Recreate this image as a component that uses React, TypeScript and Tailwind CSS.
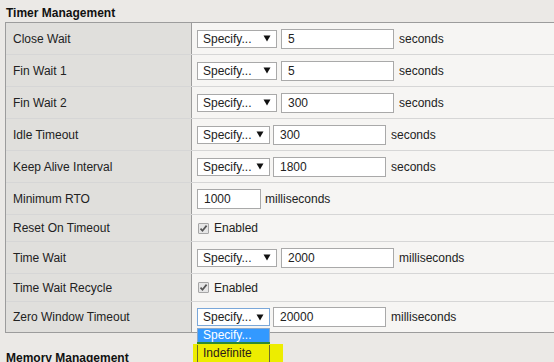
import React from "react"

type Row = {
  label: string
  h: string
  kind: "select" | "input" | "check"
  wide?: boolean
  value?: string
  unit?: string
  open?: boolean
}

const rows: Row[] = [
  { label: "Close Wait", h: "h-[32px]", kind: "select", wide: true, value: "5", unit: "seconds" },
  { label: "Fin Wait 1", h: "h-[32px]", kind: "select", wide: true, value: "5", unit: "seconds" },
  { label: "Fin Wait 2", h: "h-[32px]", kind: "select", wide: true, value: "300", unit: "seconds" },
  { label: "Idle Timeout", h: "h-[32px]", kind: "select", value: "300", unit: "seconds" },
  { label: "Keep Alive Interval", h: "h-[32px]", kind: "select", value: "1800", unit: "seconds" },
  { label: "Minimum RTO", h: "h-[32px]", kind: "input", value: "1000", unit: "milliseconds" },
  { label: "Reset On Timeout", h: "h-[27px]", kind: "check" },
  { label: "Time Wait", h: "h-[32px]", kind: "select", wide: true, value: "2000", unit: "milliseconds" },
  { label: "Time Wait Recycle", h: "h-[28px]", kind: "check" },
  { label: "Zero Window Timeout", h: "h-[30px]", kind: "select", value: "20000", unit: "milliseconds", open: true },
]

function Select({ wide, open }: { wide?: boolean; open?: boolean }) {
  return (
    <div className="relative">
      <div
        className={`flex h-[18px] items-center justify-between bg-white pl-[5px] pr-[5px] ${wide ? "w-[80px]" : "w-[73px]"} border ${open ? "border-[#7aa7d9]" : "border-[#a9a9a9]"}`}
      >
        <span>Specify...</span>
        <svg width="8" height="7" viewBox="0 0 8 7">
          <path d="M0.5 0.5 H7.5 L4 6.5 Z" fill="#111" />
        </svg>
      </div>
      {open && (
        <div className="absolute left-[-4px] top-[20px] z-10 w-[90px]">
          <div className="ml-[4px] w-[73px] border border-b-0 border-[#8aa9cc] bg-[#3399ff] pl-[5px] leading-[13px] text-white">
            Specify...
          </div>
          <div className="ml-[4px] h-[2px] w-[73px] bg-[#2f8a2f]" />
          <div className="bg-[#eded00] py-[1px]">
            <div className="ml-[4px] h-[18px] w-[73px] border border-t-0 border-[#6e6e2a] pl-[5px] leading-[17px] text-[#2a1a1a]">
              Indefinite
            </div>
          </div>
        </div>
      )}
    </div>
  )
}

function Field({ value, w }: { value: string; w: string }) {
  return (
    <div className={`flex h-[20px] items-center border border-[#a9a9a9] bg-white pl-[6px] ${w}`}>
      {value}
    </div>
  )
}

function Check() {
  return (
    <div className="flex items-center gap-[5px]">
      <div className="flex h-[11px] w-[11px] items-center justify-center rounded-[1px] border border-[#a6a6a6] bg-[#e6e6e6]">
        <svg width="9" height="9" viewBox="0 0 9 9">
          <path d="M1.5 4.6 L3.5 6.8 L7.6 1.6" fill="none" stroke="#555" strokeWidth="1.7" />
        </svg>
      </div>
      <span>Enabled</span>
    </div>
  )
}

export default function App() {
  return (
    <div className="h-[362px] w-[554px] overflow-hidden bg-[#ebe9e6] font-['Liberation_Sans',Arial,sans-serif] text-[12px] text-[#222]">
      <div className="h-[22px] pl-[6px] pt-[4px] font-bold text-[#111]">Timer Management</div>

      <div className="ml-[5px] w-[560px] border border-r-0 border-[#9c9c9c]">
        {rows.map((r, i) => (
          <div
            key={r.label}
            className={`flex ${r.h} ${i < rows.length - 1 ? "border-b border-[#d6d6d6]" : ""}`}
          >
            <div className="flex w-[186px] items-center border-r border-[#9c9c9c] bg-[#e0dfdc] pl-[7px]">
              {r.label}
            </div>
            <div className="flex flex-1 items-center bg-[#f6f5f3] pl-[5px]">
              {r.kind === "select" && (
                <div className="flex items-center">
                  <Select wide={r.wide} open={r.open} />
                  <div className={r.wide ? "ml-[4px]" : "ml-[3px]"}>
                    <Field value={r.value!} w="w-[113px]" />
                  </div>
                  <span className="ml-[5px]">{r.unit}</span>
                </div>
              )}
              {r.kind === "input" && (
                <div className="flex items-center">
                  <Field value={r.value!} w="w-[64px]" />
                  <span className="ml-[4px]">{r.unit}</span>
                </div>
              )}
              {r.kind === "check" && <div className="pl-[1px]"><Check /></div>}
            </div>
          </div>
        ))}
      </div>

      <div className="mt-[16px] pl-[6px] font-bold text-[#111]">Memory Management</div>
    </div>
  )
}
